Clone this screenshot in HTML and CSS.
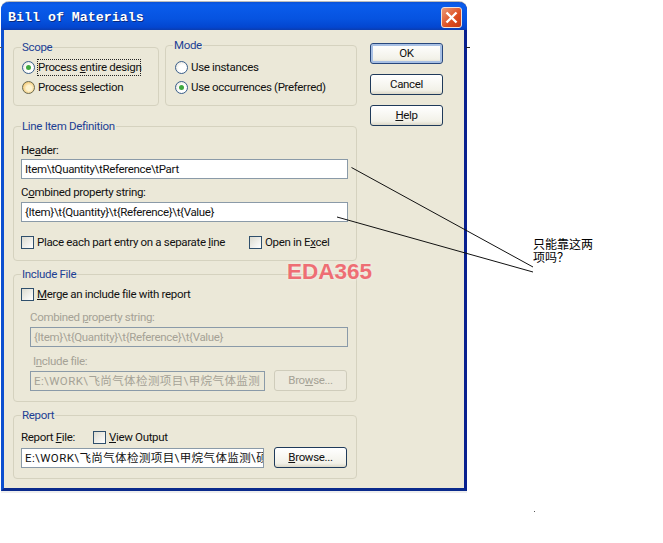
FILE: index.html
```html
<!DOCTYPE html>
<html lang="en">
<head>
    <meta charset="UTF-8">
    <title>Bill of Materials</title>
    <link rel="stylesheet" href="styles.css">
</head>
<body>
    <div class="window">
        <div class="titlebar">
            <span class="title">Bill of Materials</span>
            <div class="close-btn">
                <svg width="21" height="21" viewBox="0 0 21 21">
                    <path d="M5.5 5.5 L15.5 15.5 M15.5 5.5 L5.5 15.5" stroke="#fff" stroke-width="2.4" fill="none"/>
                </svg>
            </div>
        </div>
        <div class="dialog">
            <div class="main">
                <div class="top-row">
                    <div class="group scope">
                        <span class="legend">Scope</span>
                        <div class="radio-row">
                            <span class="radio checked"></span>
                            <span class="focus-label">Process <u>e</u>ntire design</span>
                        </div>
                        <div class="radio-row">
                            <span class="radio hover"></span>
                            <span>Process <u>s</u>election</span>
                        </div>
                    </div>
                    <div class="group mode">
                        <span class="legend">Mode</span>
                        <div class="radio-row">
                            <span class="radio"></span>
                            <span>Use instances</span>
                        </div>
                        <div class="radio-row">
                            <span class="radio checked"></span>
                            <span>Use occurrences (Preferred)</span>
                        </div>
                    </div>
                </div>

                <div class="group line-item">
                    <span class="legend">Line Item Definition</span>
                    <div class="label header-label">He<u>a</u>der:</div>
                    <div class="field">Item\tQuantity\tReference\tPart</div>
                    <div class="label second">C<u>o</u>mbined property string:</div>
                    <div class="field">{Item}\t{Quantity}\t{Reference}\t{Value}</div>
                    <div class="check-row">
                        <div class="check-item sep-line">
                            <span class="checkbox"></span>
                            <span>Place each part entry on a separate <u>l</u>ine</span>
                        </div>
                        <div class="check-item">
                            <span class="checkbox"></span>
                            <span>Open in E<u>x</u>cel</span>
                        </div>
                    </div>
                </div>

                <div class="group include">
                    <span class="legend">Include File</span>
                    <div class="check-item">
                        <span class="checkbox"></span>
                        <span><u>M</u>erge an include file with report</span>
                    </div>
                    <div class="disabled-block">
                        <div class="label">Combined <u>p</u>roperty string:</div>
                        <div class="field disabled">{Item}\t{Quantity}\t{Reference}\t{Value}</div>
                        <div class="label second inset"><span>I<u>n</u>clude file:</span></div>
                        <div class="file-row">
                            <div class="field disabled short">E:\WORK\飞尚气体检测项目\甲烷气体监测</div>
                            <div class="btn browse disabled-btn">Bro<u>w</u>se...</div>
                        </div>
                    </div>
                </div>

                <div class="group report">
                    <span class="legend">Report</span>
                    <div class="report-head">
                        <span class="report-label">Report <u>F</u>ile:</span>
                        <div class="check-item">
                            <span class="checkbox"></span>
                            <span><u>V</u>iew Output</span>
                        </div>
                    </div>
                    <div class="file-row">
                        <div class="field short">E:\WORK\飞尚气体检测项目\甲烷气体监测\硕</div>
                        <div class="btn browse"><u>B</u>rowse...</div>
                    </div>
                </div>
            </div>

            <div class="buttons">
                <div class="btn default">OK</div>
                <div class="btn">Cancel</div>
                <div class="btn"><u>H</u>elp</div>
            </div>
        </div>
    </div>

    <div class="watermark">EDA365</div>
    <div class="note">只能靠这两<br>项吗？</div>

    <!-- hand drawn lines on top of the screenshot -->
    <svg class="marks" width="663" height="543" viewBox="0 0 663 543">
        <path d="M351.5 167.5 L533 267" stroke="#111" fill="none"/>
        <path d="M337 217 L533 272" stroke="#111" fill="none"/>
        <path d="M534 511.5 h1" stroke="#555" fill="none"/>
        <path d="M466 47.5 h4" stroke="#222" fill="none"/>
        <path d="M0 47.5 h2" stroke="#555" fill="none"/>
    </svg>
</body>
</html>
```

FILE: styles.css
```css
* {
    margin: 0;
    padding: 0;
    box-sizing: border-box;
}

body {
    background-color: #fff;
    color: #111;
    font-family: Roboto, 'Noto Sans CJK SC', sans-serif;
    font-size: 11.5px;
    letter-spacing: -0.33px;
    line-height: 14px;
    padding: 2px 0 0 1px;
    height: 543px;
    overflow: hidden;
    position: relative;
}

.window {
    width: 466px;
    height: 489px;
    background-color: #ebe8d8;
    border-radius: 8px 8px 0 0;
    border-left: 3px solid #0b4fd0;
    border-right: 3px solid #08208f;
    border-bottom: 3px solid #0a2a8c;
    box-shadow: 0 -1px 0 #bbb, 0 2px 0 #eee;
}

.titlebar {
    height: 28px;
    margin: 0 -3px;
    padding: 3px 5px 0 7px;
    display: flex;
    align-items: center;
    justify-content: space-between;
    border-radius: 8px 8px 0 0;
    background: linear-gradient(#0b52d6 0, #0a5cec 10%, #0653e0 60%, #0346d0 90%, #0a3cb0 100%);
}

.title {
    color: #fff;
    font-family: 'Liberation Mono', monospace;
    font-weight: bold;
    font-size: 13.3px;
    letter-spacing: 0;
    text-shadow: 1px 1px 0 #0a2a80;
}

.close-btn {
    width: 21px;
    height: 21px;
    border: 1px solid #f0e0d8;
    border-radius: 3px;
    background: linear-gradient(135deg, #ea9a78, #dd4d20 60%, #c63a14);
    display: flex;
    align-items: center;
    justify-content: center;
}

.close-btn svg {
    flex: none;
}

.dialog {
    display: flex;
    padding-left: 9px;
}

.main {
    width: 344px;
    display: flex;
    flex-direction: column;
}

.top-row {
    display: flex;
    align-items: flex-end;
    gap: 6px;
    height: 76px;
}

.group {
    position: relative;
    border: 1px solid #d5d2bf;
    border-radius: 4px;
}

.legend {
    position: absolute;
    top: -8px;
    left: 7px;
    padding: 0 1px;
    background-color: #ebe8d8;
    color: #1c3f94;
}

.scope {
    width: 146px;
    height: 59px;
    padding: 9px 0 0 8px;
}

.mode {
    width: 192px;
    height: 61px;
    padding: 11px 0 0 9px;
}

.radio-row {
    display: flex;
    align-items: center;
    gap: 3px;
    height: 20px;
}

.radio {
    width: 13px;
    height: 13px;
    border: 1px solid #3a5f8c;
    border-radius: 50%;
    background: radial-gradient(circle at 60% 60%, #fff 40%, #dcd9cc 100%);
    flex: none;
    display: flex;
    align-items: center;
    justify-content: center;
}

.radio.checked::after {
    content: "";
    width: 5px;
    height: 5px;
    border-radius: 50%;
    background-color: #3fa93f;
}

.radio.hover {
    background: radial-gradient(circle at 55% 55%, #fdf3d0 30%, #efb040 100%);
    border-color: #6a6a50;
}

.focus-label {
    outline: 1px dotted #222;
    width: 102px;
    height: 15px;
    white-space: nowrap;
}

.line-item {
    margin-top: 20px;
    height: 135px;
    padding: 15px 8px 0 7px;
}

.label {
    height: 14px;
}

.label.header-label {
    line-height: 16px;
}

.label.second {
    margin-top: 6px;
}

.label.inset {
    margin-top: 7px;
    padding-left: 3px;
}

.field {
    height: 20px;
    margin-top: 3px;
    padding: 0 3px;
    line-height: 18px;
    background-color: #fff;
    border: 1px solid #8a9aa8;
    white-space: nowrap;
    overflow: hidden;
}

.field.disabled {
    background-color: #ebe8d8;
    color: #a5a296;
}

.field.short {
    width: 243px;
    margin-top: 0;
    flex: none;
    letter-spacing: 0.4px;
}

.check-row {
    display: flex;
    margin-top: 13px;
}

.check-item {
    display: flex;
    align-items: center;
    gap: 3px;
    height: 14px;
}

.sep-line {
    width: 228px;
}

.checkbox {
    width: 13px;
    height: 13px;
    border: 1px solid #2f4f6c;
    background: linear-gradient(135deg, #dcdbd0, #fff);
    flex: none;
}

.include {
    margin-top: 13px;
    height: 128px;
    padding: 12px 8px 0 7px;
}

.disabled-block {
    padding: 9px 0 0 9px;
    color: #a5a296;
}

.file-row {
    display: flex;
    align-items: center;
    gap: 10px;
}

.disabled-block .file-row {
    margin-top: 2px;
    gap: 9px;
}

.disabled-block .field.short {
    width: 235px;
}

.report {
    margin-top: 13px;
    height: 64px;
    padding: 13px 8px 0 7px;
}

.report-head {
    display: flex;
    align-items: center;
    height: 16px;
    margin-bottom: 2px;
}

.report-label {
    width: 72px;
}

.btn {
    width: 73px;
    height: 21px;
    border: 1px solid #1f3a5a;
    border-radius: 3px;
    background: linear-gradient(#fff, #f2f1e8 80%, #dcd8c8);
    text-align: center;
    line-height: 19px;
    flex: none;
}

.btn.default {
    border-color: #27477c;
    box-shadow: inset 0 0 0 2px #a8c0e4;
}

.btn.disabled-btn {
    border-color: #cfccbb;
    background: #ece9dc;
    color: #a5a296;
}

.buttons {
    display: flex;
    flex-direction: column;
    gap: 10px;
    margin-left: 13px;
    padding-top: 13px;
}

.watermark {
    position: absolute;
    left: 287px;
    top: 259px;
    font-family: 'Liberation Sans', sans-serif;
    font-size: 22.5px;
    letter-spacing: 0;
    line-height: 26px;
    font-weight: bold;
    color: #ee6e74;
    text-shadow: 0 0 3px #f6f2ea;
}

.note {
    position: absolute;
    left: 533px;
    top: 239px;
    font-size: 12px;
    letter-spacing: 0;
    line-height: 13px;
    color: #000;
}

.marks {
    position: absolute;
    left: 0;
    top: 0;
    pointer-events: none;
}
```
